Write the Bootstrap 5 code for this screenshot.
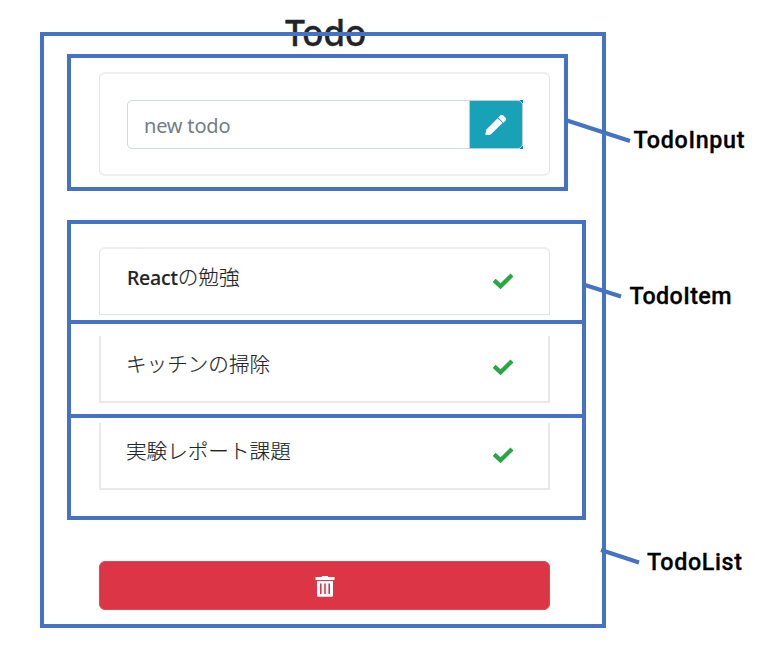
<!DOCTYPE html>
<html lang="ja">
<head>
<meta charset="utf-8">
<meta name="viewport" content="width=device-width, initial-scale=1">
<title>Todo</title>
<link href="https://cdn.jsdelivr.net/npm/bootstrap@5.3.0/dist/css/bootstrap.min.css" rel="stylesheet">
<style>
body{font-family:"Noto Sans","Noto Sans CJK JP",sans-serif;color:#212529;background:#fff;height:649px;overflow:hidden}
.todo-app{width:451px;margin-left:99px;padding-top:10px}
.todo-title{font-size:35.5px;line-height:44px;font-weight:500;-webkit-text-stroke:.3px #212529;letter-spacing:-.5px;padding-left:2px;margin-bottom:18px}
.todo-form{height:104px;padding:26px 26px 26px 27px;border:2px solid #efeff0;border-right:1px solid #e5e5e6;border-left:1px solid #e5e5e6;border-radius:6px;margin-bottom:71px}
.todo-form .input-group{height:49px;width:396px}
.todo-form .form-control{font-size:20px;letter-spacing:-.2px;padding:2px 16px 0;border-color:#d3d9df;border-radius:5px}
.todo-form .form-control::placeholder{color:#757d84}
.todo-form .add-slot{width:54px;margin-left:-1px;background:linear-gradient(#007bff,#007bff) right top/3px 3px no-repeat,linear-gradient(#007bff,#007bff) right bottom/3px 3px no-repeat}
.todo-form .btn{width:54px;height:49px;padding:0;background:#17a2b8;border:1px solid #b9cfda;border-radius:0 5px 5px 0}
.todo-row{border:2px solid #e9e9ea;border-top:0;padding:0 34px 0 25px;height:67px;margin-bottom:20px;font-size:20.6px;line-height:30px;font-weight:300;font-family:"Noto Sans CJK JP",sans-serif}
.todo-row:first-child{border:1px solid #e3e3e4;border-top:2px solid #efeff0;padding:0 35px 0 27px;border-radius:6px 6px 0 0;height:68px;margin-bottom:21px}
.todo-row .todo-name{margin-top:12px;-webkit-text-stroke:.15px #212529}
.todo-row svg{margin-top:23px}
.todo-row:last-child svg{margin-top:24px}
.todo-row:first-child svg{margin-top:24px}
.latin{font-family:"Noto Sans",sans-serif;font-weight:500;font-size:19.5px;letter-spacing:-.2px}
.todo-clear{height:49px;margin-top:71px;background:#dc3545;border-color:#dd4a58;border-radius:6px}
.notes text{font-family:Roboto,"Liberation Sans",sans-serif;font-weight:500;font-size:23.3px;fill:#000;stroke:#000;stroke-width:.3px}
</style>
</head>
<body class="position-relative">
<main class="todo-app">
  <h1 class="todo-title text-center">Todo</h1>
  <form class="todo-form bg-white">
    <div class="input-group flex-nowrap">
      <input class="form-control" type="text" placeholder="new todo" aria-label="new todo">
      <div class="add-slot flex-shrink-0">
        <button class="btn d-flex align-items-center justify-content-center" type="button" aria-label="add">
          <svg width="22" height="22" viewBox="0 0 22 22" fill="#fff"><path d="M.4 20.600l.8-4.800L12.600 4.200l4.900 4.900L6 20.300q-.8.8-1.800.8H.4zM13.300 3.500l2.300-2.300q1.200-1 2.500 0l2.700 2.700q1 1.200 0 2.500l-2.400 2.400z"/></svg>
        </button>
      </div>
    </div>
  </form>
  <div class="todo-items">
    <div class="todo-row d-flex justify-content-between align-items-start"><span class="todo-name"><span class="latin">React</span>の勉強</span><svg width="21" height="17" viewBox="0 0 21 17"><path d="M1.200 7.300l6.300 6L19 2" fill="none" stroke="#28a745" stroke-width="4.300"/></svg></div>
    <div class="todo-row d-flex justify-content-between align-items-start"><span class="todo-name">キッチンの掃除</span><svg width="21" height="17" viewBox="0 0 21 17"><path d="M1.200 7.300l6.300 6L19 2" fill="none" stroke="#28a745" stroke-width="4.300"/></svg></div>
    <div class="todo-row d-flex justify-content-between align-items-start"><span class="todo-name">実験レポート課題</span><svg width="21" height="17" viewBox="0 0 21 17"><path d="M1.200 7.300l6.300 6L19 2" fill="none" stroke="#28a745" stroke-width="4.300"/></svg></div>
  </div>
  <button class="todo-clear btn btn-danger w-100 d-flex align-items-center justify-content-center p-0" type="button" aria-label="clear">
    <svg width="20" height="22" viewBox="0 0 20 22" fill="#fff"><path d="M.5 2h6L7.200 1h5.600l.7 1h6v3H.5z"/><path fill-rule="evenodd" d="M2 6h16v14.500q0 1.200-1.200 1.200H3.200Q2 21.700 2 20.500zM5 8.500V19h1.600V8.500zm4.200 0V19h1.600V8.500zm4.200 0V19H15V8.500z"/></svg>
  </button>
</main>
<!-- component boundaries and their callouts, laid over the app -->
<svg class="notes position-absolute top-0 start-0 pe-none" width="772" height="649" viewBox="0 0 772 649">
  <g fill="none" stroke="#4472c4" stroke-width="4">
    <rect x="42" y="34" width="562" height="592"/>
    <rect x="69" y="56" width="497" height="133"/>
    <rect x="69" y="222" width="515" height="296"/>
    <path d="M69 322h515M69 416h515M567 120.500l63 20.500M585 285l36 11.500M601 550l38 12.500"/>
  </g>
  <text x="633.500" y="148" textLength="111">TodoInput</text>
  <text x="629.500" y="304" textLength="102">TodoItem</text>
  <text x="647" y="570" textLength="95">TodoList</text>
</svg>
<script src="https://cdn.jsdelivr.net/npm/bootstrap@5.3.0/dist/js/bootstrap.bundle.min.js"></script>
</body>
</html>
